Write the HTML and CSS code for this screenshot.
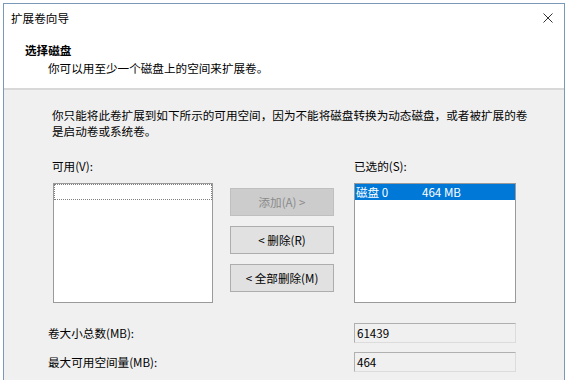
FILE: index.html
```html
<!DOCTYPE html>
<html lang="zh-CN">

<head>
    <meta charset="UTF-8">
    <title>扩展卷向导</title>
    <link rel="stylesheet" href="styles.css">
</head>

<body>

    <div class="window">
        <!-- Header -->
        <div class="header">
            <div class="title-bar">
                <span class="title">扩展卷向导</span>
                <svg class="close" width="10" height="10" viewBox="0 0 10 10">
                    <path d="M0.5 0.5 L9.5 9.5 M9.5 0.5 L0.5 9.5" stroke="#333" stroke-width="1" fill="none"/>
                </svg>
            </div>
            <div class="heading">选择磁盘</div>
            <div class="subheading">你可以用至少一个磁盘上的空间来扩展卷。</div>
        </div>

        <!-- Body -->
        <div class="content">
            <p class="intro">你只能将此卷扩展到如下所示的可用空间，因为不能将磁盘转换为动态磁盘，或者被扩展的卷<br>是启动卷或系统卷。</p>

            <div class="pickers">
                <div class="col col-left">
                    <div class="label">可用(V):</div>
                    <div class="listbox">
                        <div class="focus-row"></div>
                    </div>
                </div>
                <div class="buttons">
                    <button class="btn" disabled>添加(A) &gt;</button>
                    <button class="btn">&lt; 删除(R)</button>
                    <button class="btn">&lt; 全部删除(M)</button>
                </div>
                <div class="col col-right">
                    <div class="label">已选的(S):</div>
                    <div class="listbox">
                        <div class="item selected"><span class="disk">磁盘 0</span><span>464 MB</span></div>
                    </div>
                </div>
            </div>

            <div class="field-row">
                <span class="field-label">卷大小总数(MB):</span>
                <div class="field">61439</div>
            </div>
            <div class="field-row">
                <span class="field-label">最大可用空间量(MB):</span>
                <div class="field">464</div>
            </div>
            <div class="field-row">
                <span class="field-label"></span>
                <div class="field"></div>
            </div>
        </div>
    </div>

</body>

</html>
```

FILE: styles.css
```css
html,
body {
    margin: 0;
    height: 380px;
    overflow: hidden;
    background-color: #ffffff;
}

body {
    font-family: "Noto Sans CJK SC", "Liberation Sans", sans-serif;
    font-size: 11.6px;
    color: #000;
}

.window {
    margin: 3px 0 0 3px;
    width: 560px;
    height: 420px;
    border: 1px solid #7b98b8;
    border-bottom: none;
    background-color: #f0f0f0;
}

/* Header */
.header {
    background-color: #ffffff;
    height: 84px;
    border-bottom: 2px solid #d8d8d8;
}

.title-bar {
    height: 28px;
    display: flex;
    align-items: center;
    justify-content: space-between;
    padding: 0 11px 0 7px;
}

.title {
    line-height: 16px;
}

.heading {
    margin: 10px 0 0 21px;
    font-weight: bold;
    line-height: 16px;
}

.subheading {
    margin: 2px 0 0 44px;
    line-height: 16px;
}

/* Body */
.content {
    padding: 17px 0 0 48px;
}

.intro {
    margin: 0;
    line-height: 16px;
    white-space: nowrap;
}

.pickers {
    display: flex;
    margin-top: 19px;
}

.label {
    line-height: 16px;
    margin-bottom: 9px;
}

.col-left .listbox {
    margin-left: 1px;
    width: 158px;
}

.col-right .listbox {
    width: 160px;
}

.listbox {
    height: 118px;
    border: 1px solid #9a9a9a;
    background-color: #ffffff;
}

.focus-row {
    height: 14px;
    border: 1px dotted #808080;
}

.item {
    display: flex;
    height: 16px;
    line-height: 16px;
    padding-left: 1px;
}

.item .disk {
    width: 66px;
}

.selected {
    background-color: #0078d7;
    color: #ffffff;
}

.buttons {
    display: flex;
    flex-direction: column;
    gap: 10px;
    padding-top: 30px;
    margin: 0 20px 0 17px;
}

.btn {
    width: 104px;
    height: 28px;
    padding: 0;
    font-family: inherit;
    font-size: 11.6px;
    color: #000;
    background-color: #e1e1e1;
    border: 1px solid #adadad;
}

.btn:disabled {
    background-color: #cccccc;
    border-color: #bfbfbf;
    color: #8a8a8a;
}

/* Summary fields */
.field-row {
    display: flex;
    align-items: center;
    margin-top: 9px;
}

.pickers + .field-row {
    margin-top: 20px;
}

.field-label {
    width: 306px;
    margin-left: -4px;
    line-height: 16px;
}

.field {
    width: 158px;
    height: 18px;
    line-height: 18px;
    padding-left: 2px;
    border: 1px solid #dcdcdc;
    border-top-color: #b0b0b0;
    border-left-color: #b0b0b0;
    background-color: #f0f0f0;
}
```
